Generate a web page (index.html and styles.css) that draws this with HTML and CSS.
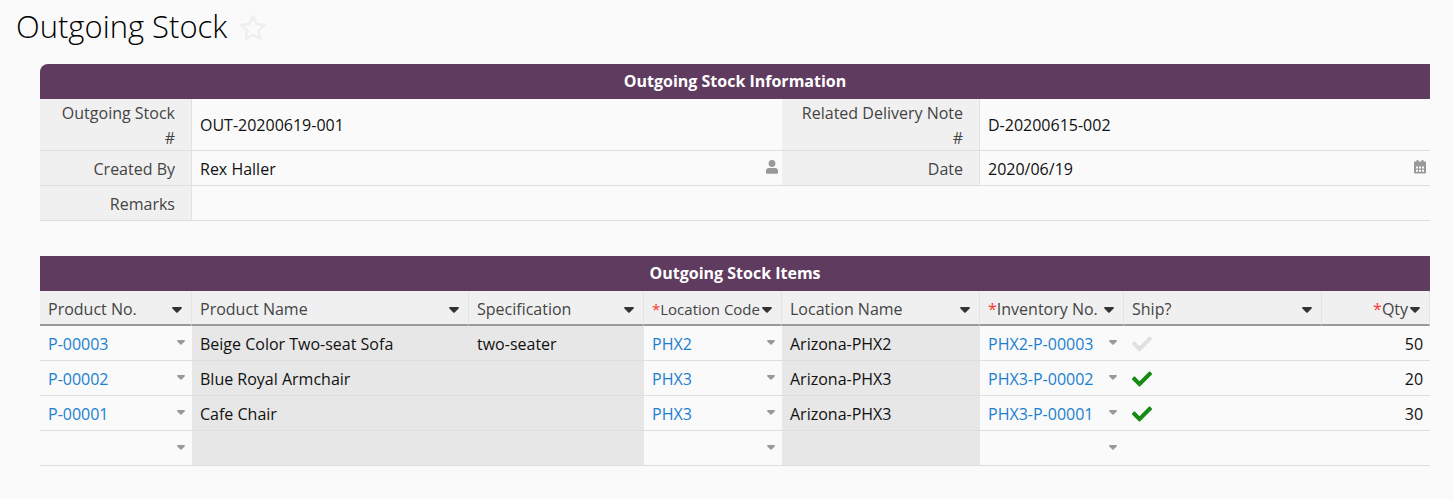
FILE: index.html
```html
<!DOCTYPE html>
<html lang="en">
<head>
    <meta charset="UTF-8">
    <meta name="viewport" content="width=device-width, initial-scale=1.0">
    <title>Outgoing Stock</title>
    <link rel="stylesheet" href="styles.css">
</head>
<body>
    <!-- shared icons -->
    <svg class="sprite" aria-hidden="true">
        <symbol id="caret" viewBox="0 0 10 6"><path d="M1.1 0h7.8c.9 0 1.3 1 .7 1.6L5.7 5.5a1 1 0 0 1-1.4 0L.4 1.6C-.2 1 .2 0 1.1 0z"/></symbol>
        <symbol id="check" viewBox="0 0 512 512"><path d="M173.9 439.4L7.5 273c-10-10-10-26.200 0-36.200l36.200-36.200c10-10 26.200-10 36.200 0L192 312.700 432.100 72.600c10-10 26.200-10 36.200 0l36.200 36.200c10 10 10 26.200 0 36.200L210.100 439.400c-10 10-26.200 10-36.200 0z"/></symbol>
    </svg>

    <header class="page-header">
        <h1>Outgoing Stock</h1>
        <button class="star" aria-label="Favorite">
            <svg viewBox="0 0 26 26"><path d="M13 2.200l3.300 7 7.500 1-5.500 5.300 1.400 7.600L13 19.500l-6.700 3.600 1.400-7.600-5.500-5.300 7.500-1z"/></svg>
        </button>
    </header>

    <main class="sheet">
        <table class="info">
            <colgroup>
                <col class="w-152"><col class="w-590"><col class="w-198"><col class="w-450">
            </colgroup>
            <thead>
                <tr><th class="band band-top" colspan="4">Outgoing Stock Information</th></tr>
            </thead>
            <tbody>
                <tr>
                    <th><label for="stockNo">Outgoing Stock #</label></th>
                    <td><input type="text" id="stockNo" value="OUT-20200619-001"></td>
                    <th><label for="noteNo">Related Delivery Note #</label></th>
                    <td><input type="text" id="noteNo" value="D-20200615-002"></td>
                </tr>
                <tr>
                    <th><label for="createdBy">Created By</label></th>
                    <td>
                        <div class="field">
                            <input type="text" id="createdBy" value="Rex Haller">
                            <button class="field-icon" aria-label="Choose user">
                                <svg viewBox="0 0 12 14"><circle cx="6" cy="3.500" r="3.400"/><path d="M3 8h6a3 3 0 0 1 3 3v1.500c0 .8-.5 1.300-1.300 1.300H1.300C.5 13.800 0 13.300 0 12.500V11a3 3 0 0 1 3-3z"/></svg>
                            </button>
                        </div>
                    </td>
                    <th><label for="date">Date</label></th>
                    <td>
                        <div class="field">
                            <input type="text" id="date" value="2020/06/19">
                            <button class="field-icon" aria-label="Choose date">
                                <svg viewBox="0 0 12 14"><path fill-rule="evenodd" d="M2.500 0h2v1.500h3V0h2v1.500H11a1 1 0 0 1 1 1v10a1 1 0 0 1-1 1H1a1 1 0 0 1-1-1v-10a1 1 0 0 1 1-1h1.500zM2 6.500v2h2v-2zm3 0v2h2v-2zm3 0v2h2v-2zM2 9.700v2h2v-2zm3 0v2h2v-2zm3 0v2h2v-2z"/></svg>
                            </button>
                        </div>
                    </td>
                </tr>
                <tr>
                    <th><label for="remarks">Remarks</label></th>
                    <td colspan="3"><input type="text" id="remarks" value=""></td>
                </tr>
            </tbody>
        </table>

        <table class="items">
            <colgroup>
                <col class="w-152"><col class="w-277"><col class="w-175"><col class="w-138"><col class="w-198"><col class="w-144"><col class="w-198"><col class="w-108">
            </colgroup>
            <thead>
                <tr><th class="band" colspan="8">Outgoing Stock Items</th></tr>
                <tr class="columns">
                    <th><div class="head"><span>Product No.</span><button class="caret" aria-label="Product No. menu"><svg><use href="#caret"/></svg></button></div></th>
                    <th><div class="head"><span>Product Name</span><button class="caret" aria-label="Product Name menu"><svg><use href="#caret"/></svg></button></div></th>
                    <th><div class="head"><span>Specification</span><button class="caret" aria-label="Specification menu"><svg><use href="#caret"/></svg></button></div></th>
                    <th><div class="head small"><span><b class="required">*</b>Location Code</span><button class="caret" aria-label="Location Code menu"><svg><use href="#caret"/></svg></button></div></th>
                    <th><div class="head"><span>Location Name</span><button class="caret" aria-label="Location Name menu"><svg><use href="#caret"/></svg></button></div></th>
                    <th><div class="head"><span><b class="required">*</b>Inventory No.</span><button class="caret" aria-label="Inventory No. menu"><svg><use href="#caret"/></svg></button></div></th>
                    <th><div class="head"><span>Ship?</span><button class="caret" aria-label="Ship menu"><svg><use href="#caret"/></svg></button></div></th>
                    <th><div class="head end"><span><b class="required">*</b>Qty</span><button class="caret" aria-label="Qty menu"><svg><use href="#caret"/></svg></button></div></th>
                </tr>
            </thead>
            <tbody>
                <tr>
                    <td><div class="pick"><a href="#">P-00003</a><button class="caret" aria-label="Select product"><svg><use href="#caret"/></svg></button></div></td>
                    <td class="locked">Beige Color Two-seat Sofa</td>
                    <td class="locked">two-seater</td>
                    <td><div class="pick"><a href="#">PHX2</a><button class="caret" aria-label="Select location"><svg><use href="#caret"/></svg></button></div></td>
                    <td class="locked">Arizona-PHX2</td>
                    <td><div class="pick"><a href="#">PHX2-P-00003</a><button class="caret" aria-label="Select inventory"><svg><use href="#caret"/></svg></button></div></td>
                    <td><label class="ship"><input type="checkbox" aria-label="Ship P-00003"><svg><use href="#check"/></svg></label></td>
                    <td class="num">50</td>
                </tr>
                <tr>
                    <td><div class="pick"><a href="#">P-00002</a><button class="caret" aria-label="Select product"><svg><use href="#caret"/></svg></button></div></td>
                    <td class="locked">Blue Royal Armchair</td>
                    <td class="locked"></td>
                    <td><div class="pick"><a href="#">PHX3</a><button class="caret" aria-label="Select location"><svg><use href="#caret"/></svg></button></div></td>
                    <td class="locked">Arizona-PHX3</td>
                    <td><div class="pick"><a href="#">PHX3-P-00002</a><button class="caret" aria-label="Select inventory"><svg><use href="#caret"/></svg></button></div></td>
                    <td><label class="ship"><input type="checkbox" aria-label="Ship P-00002" checked><svg><use href="#check"/></svg></label></td>
                    <td class="num">20</td>
                </tr>
                <tr>
                    <td><div class="pick"><a href="#">P-00001</a><button class="caret" aria-label="Select product"><svg><use href="#caret"/></svg></button></div></td>
                    <td class="locked">Cafe Chair</td>
                    <td class="locked"></td>
                    <td><div class="pick"><a href="#">PHX3</a><button class="caret" aria-label="Select location"><svg><use href="#caret"/></svg></button></div></td>
                    <td class="locked">Arizona-PHX3</td>
                    <td><div class="pick"><a href="#">PHX3-P-00001</a><button class="caret" aria-label="Select inventory"><svg><use href="#caret"/></svg></button></div></td>
                    <td><label class="ship"><input type="checkbox" aria-label="Ship P-00001" checked><svg><use href="#check"/></svg></label></td>
                    <td class="num">30</td>
                </tr>
                <tr>
                    <td><div class="pick"><button class="caret" aria-label="Select product"><svg><use href="#caret"/></svg></button></div></td>
                    <td class="locked"></td>
                    <td class="locked"></td>
                    <td><div class="pick"><button class="caret" aria-label="Select location"><svg><use href="#caret"/></svg></button></div></td>
                    <td class="locked"></td>
                    <td><div class="pick"><button class="caret" aria-label="Select inventory"><svg><use href="#caret"/></svg></button></div></td>
                    <td></td>
                    <td></td>
                </tr>
            </tbody>
        </table>
    </main>
</body>
</html>
```
FILE: styles.css
```css
:root {
    --band: #5f3b5f;
    --background: #fafafa;
    --head: #f0f0f0;
    --locked: #e7e7e7;
    --line: #dedede;
    --link: #1a80cf;
    --label: #444;
}

* {
    box-sizing: border-box;
    margin: 0;
    padding: 0;
}

body {
    font-family: "Open Sans", sans-serif;
    font-size: 16px;
    line-height: 25px;
    background: var(--background);
    color: #111;
}

button {
    background: none;
    border: none;
    cursor: pointer;
}

svg {
    display: block;
    fill: currentColor;
}

.sprite {
    display: none;
}

.page-header {
    display: flex;
    align-items: center;
    gap: 12px;
    height: 56px;
    padding: 0 16px 4px;
}

h1 {
    font-size: 31px;
    font-weight: 300;
    line-height: 40px;
    color: #000;
}

.star {
    padding-top: 4px;
}

.star svg {
    width: 28px;
    height: 28px;
    fill: none;
    stroke: #efefef;
    stroke-width: 2.4;
    stroke-linejoin: round;
}

.sheet {
    display: flex;
    flex-direction: column;
    gap: 35px;
    padding: 8px 24px 32px 40px;
}

table {
    width: 100%;
    table-layout: fixed;
    border-collapse: separate;
    border-spacing: 0;
}

.w-108 { width: 108px; }
.w-138 { width: 138px; }
.w-144 { width: 144px; }
.w-152 { width: 152px; }
.w-175 { width: 175px; }
.w-198 { width: 198px; }
.w-277 { width: 277px; }
.w-450 { width: 450px; }
.w-590 { width: 590px; }

th, td {
    height: 35px;
    padding: 2px 7px 0 8px;
    border-bottom: 1px solid var(--line);
    font-weight: 400;
    text-align: left;
    vertical-align: middle;
}

th.band {
    padding: 0;
    background: var(--band);
    border: none;
    color: #fff;
    font-weight: 700;
    text-align: center;
}

.band-top {
    border-top-left-radius: 8px;
}

.info tbody th {
    padding: 2px 16px 0 8px;
    background: var(--head);
    border-right: 1px solid #e2e2e2;
    border-bottom: none;
    box-shadow: inset 0 -1px var(--line);
    color: var(--label);
    text-align: right;
}

.info td {
    padding-right: 4px;
}

.info label {
    display: block;
}

.info input {
    display: block;
    width: 100%;
    height: 25px;
    border: none;
    outline: none;
    background: none;
    font: inherit;
    color: inherit;
}

.field {
    display: flex;
    align-items: center;
}

.field-icon {
    color: #999;
}

.field-icon svg {
    width: 12px;
    height: 14px;
    margin-bottom: 4px;
}

/* line items */
.columns th {
    padding-top: 4px;
    background: var(--head);
    border-right: 1px solid #e4e4e4;
    border-bottom: 2px solid #999;
    color: var(--label);
}

.columns th {
    padding-right: 9px;
}

.head, .pick {
    display: flex;
    align-items: center;
    justify-content: space-between;
    white-space: nowrap;
}

.head.end {
    justify-content: flex-end;
    gap: 2px;
}

.head.small {
    font-size: 15px;
}

.head .caret {
    color: #333;
}

.caret svg {
    width: 10px;
    height: 6px;
}

.required {
    color: #f33;
    font-weight: 400;
}

.pick {
    height: 25px;
}

.pick .caret {
    margin-bottom: 3px;
    margin-left: auto;
    color: #999;
}

.pick .caret svg {
    width: 8px;
    height: 5px;
}

.locked {
    background: var(--locked);
}

.items .num {
    text-align: right;
}

a {
    color: var(--link);
    text-decoration: none;
}

.ship {
    display: block;
    width: 20px;
    cursor: pointer;
}

.ship input {
    position: absolute;
    opacity: 0;
}

.ship svg {
    width: 20px;
    height: 20px;
    color: #e0e0e0;
}

.ship input:checked + svg {
    color: #158a15;
}
```
